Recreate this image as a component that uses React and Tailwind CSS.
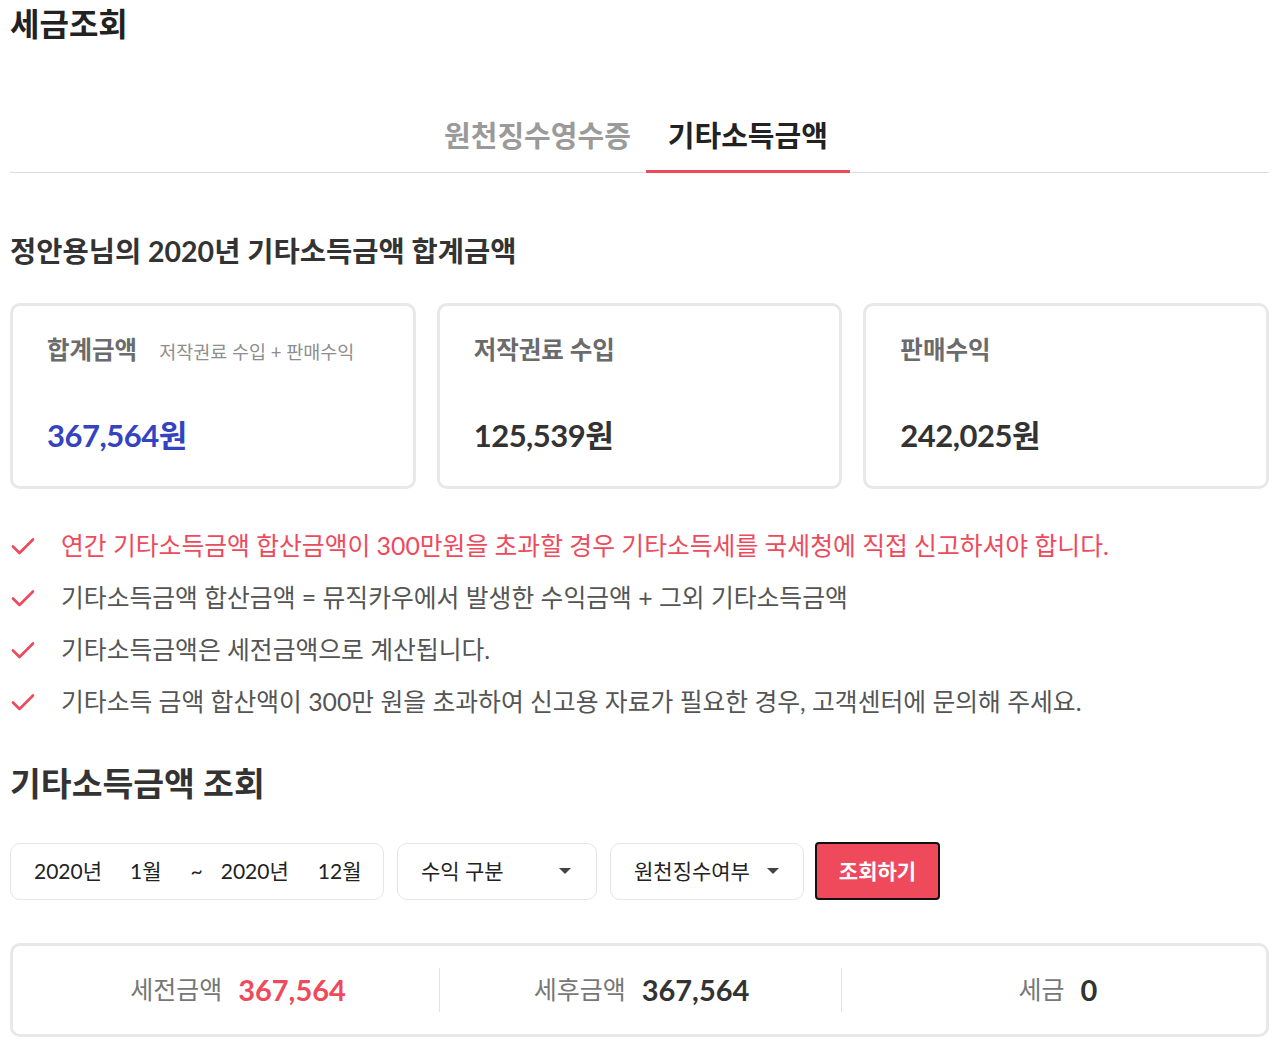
const font = { fontFamily: "Lato, 'Noto Sans CJK KR', sans-serif" };

const Check = () => (
  <svg width="26" height="22" viewBox="0 0 26 22" className="shrink-0">
    <path d="M3 11.5 L9.5 18 L23 4.5" fill="none" stroke="#ee4a5c" strokeWidth="2.6" strokeLinecap="round" strokeLinejoin="round" />
  </svg>
);

const Caret = () => (
  <svg width="14" height="8" viewBox="0 0 14 8">
    <path d="M1 1 L13 1 L7 7 Z" fill="#444" />
  </svg>
);

const notes = [
  { text: "연간 기타소득금액 합산금액이 300만원을 초과할 경우 기타소득세를 국세청에 직접 신고하셔야 합니다.", red: true },
  { text: "기타소득금액 합산금액 = 뮤직카우에서 발생한 수익금액 + 그외 기타소득금액" },
  { text: "기타소득금액은 세전금액으로 계산됩니다." },
  { text: "기타소득 금액 합산액이 300만 원을 초과하여 신고용 자료가 필요한 경우, 고객센터에 문의해 주세요." },
];

const Card = ({ label, sub, amount, blue }) => (
  <div className="flex-1 h-[186px] border-[3px] border-[#e8e8e8] rounded-[10px] px-[34px] pt-[26px]">
    <div className="flex items-baseline gap-[22px]">
      <span className="text-[24.5px] font-bold text-[#6b6b6b]">{label}</span>
      {sub && <span className="text-[18.5px] text-[#8e8e8e]">{sub}</span>}
    </div>
    <div className={`mt-[44px] text-[31px] font-bold tracking-[-0.5px] ${blue ? "text-[#3443c0]" : "text-[#333]"}`}>
      {amount}
    </div>
  </div>
);

export default function App() {
  return (
    <div style={font} className="bg-white min-h-[1052px] px-[10px] text-[#222]">
      <h1 className="text-[32px] font-bold leading-none pt-[8px] text-[#222]">세금조회</h1>

      <div className="mt-[81px] border-b border-[#dcdcdc] flex justify-center">
        <div className="px-[15px] pb-[20px] text-[29px] font-bold text-[#9a9a9a] leading-none">원천징수영수증</div>
        <div className="px-[22px] pb-[20px] text-[29px] font-bold text-[#222] leading-none border-b-[3px] border-[#ee4a5c] -mb-px">기타소득금액</div>
      </div>

      <h2 className="mt-[64px] text-[28.5px] font-bold text-[#333] leading-none">정안용님의 2020년 기타소득금액 합계금액</h2>

      <div className="mt-[37px] flex gap-[21px]">
        <Card label="합계금액" sub="저작권료 수입 + 판매수익" amount="367,564원" blue />
        <Card label="저작권료 수입" amount="125,539원" />
        <Card label="판매수익" amount="242,025원" />
      </div>

      <ul className="mt-[42px] flex flex-col gap-[22px]">
        {notes.map((n, i) => (
          <li key={i} className="flex items-center gap-[25px] h-[30px]">
            <Check />
            <span className={`text-[24.8px] ${n.red ? "text-[#ee4a5c]" : "text-[#555]"}`}>{n.text}</span>
          </li>
        ))}
      </ul>

      <h2 className="mt-[50px] text-[33.5px] font-bold text-[#333] leading-none">기타소득금액 조회</h2>

      <div className="mt-[42px] flex items-center text-[21px] text-[#222]">
        <div className="w-[374px] h-[57px] border border-[#e6e6e6] rounded-[10px] flex items-center pl-[23px]">
          <span>2020년</span>
          <span className="ml-[28px]">1월</span>
          <span className="ml-[29px]">~</span>
          <span className="ml-[18px]">2020년</span>
          <span className="ml-[29px]">12월</span>
        </div>
        <div className="ml-[13px] w-[200px] h-[57px] border border-[#e6e6e6] rounded-[10px] flex items-center justify-between pl-[23px] pr-[24px]">
          <span>수익 구분</span>
          <Caret />
        </div>
        <div className="ml-[13px] w-[194px] h-[57px] border border-[#e6e6e6] rounded-[10px] flex items-center pl-[23px] gap-[16px]">
          <span>원천징수여부</span>
          <Caret />
        </div>
        <button className="ml-[11px] w-[125px] h-[58px] bg-[#ee4a5c] border-2 border-[#111] rounded-[4px] text-white font-bold text-[21px]">조회하기</button>
      </div>

      <div className="mt-[43px] h-[94px] border-[3px] border-[#e8e8e8] rounded-[10px] flex items-center">
        <div className="w-[426px] flex items-center justify-center gap-[16px] pl-[24px]">
          <span className="text-[25px] text-[#777]">세전금액</span>
          <span className="text-[29px] font-bold text-[#ee4a5c]">367,564</span>
        </div>
        <div className="w-px h-[44px] bg-[#e2e2e2]" />
        <div className="w-[401px] flex items-center justify-center gap-[16px] pl-[2px]">
          <span className="text-[25px] text-[#777]">세후금액</span>
          <span className="text-[29px] font-bold text-[#333]">367,564</span>
        </div>
        <div className="w-px h-[44px] bg-[#e2e2e2]" />
        <div className="flex-1 flex items-center justify-center gap-[16px] pl-[8px]">
          <span className="text-[25px] text-[#777]">세금</span>
          <span className="text-[29px] font-bold text-[#333]">0</span>
        </div>
      </div>
    </div>
  );
}
